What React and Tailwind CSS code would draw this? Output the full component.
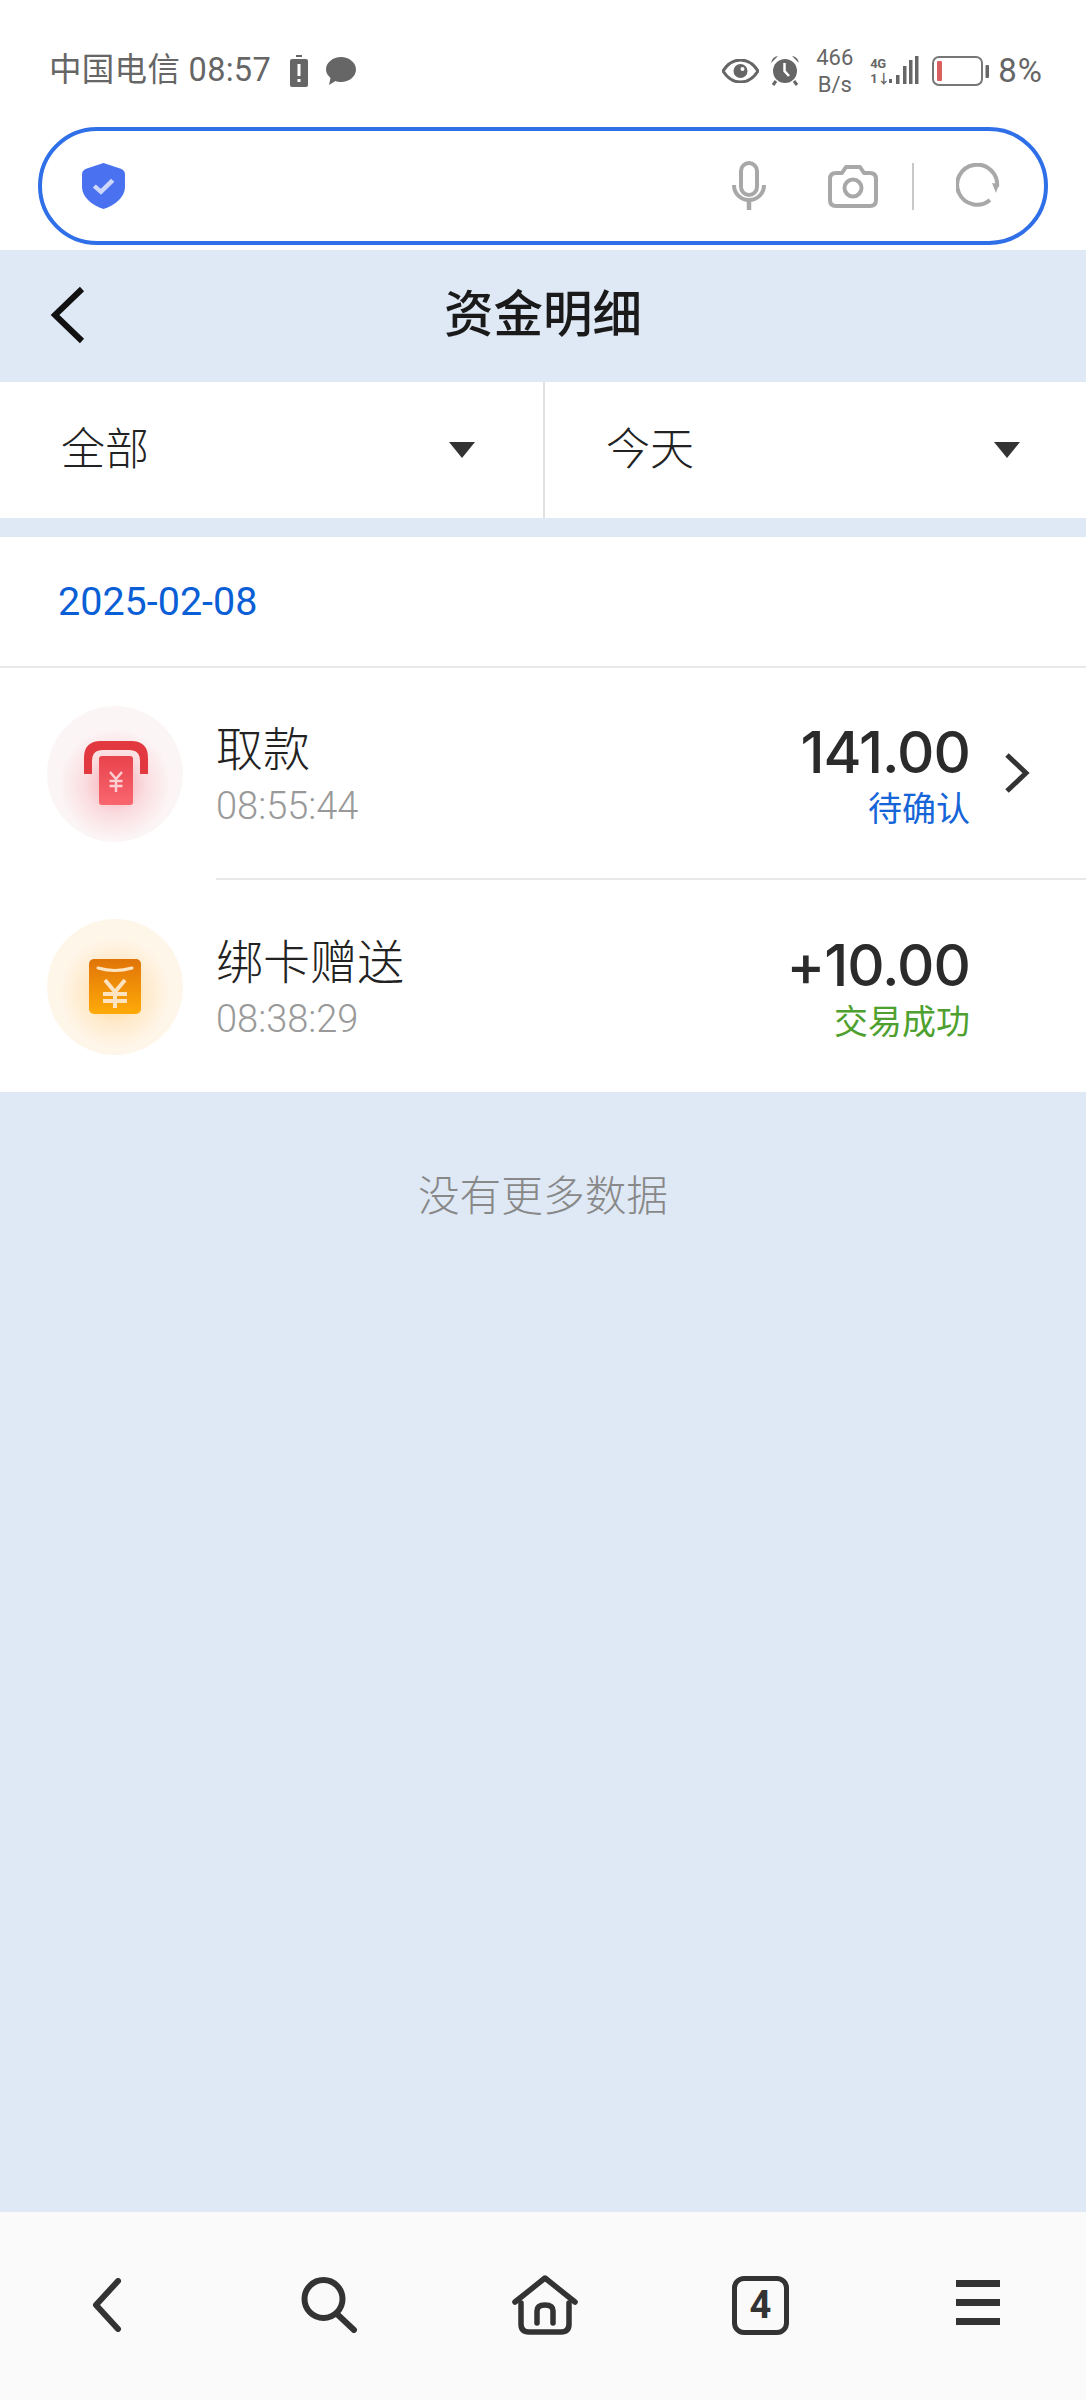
import React from "react";

const FONT = "font-['Roboto','Noto_Sans_CJK_SC',sans-serif]";

function Shield() {
  return (
    <svg width="45" height="48" viewBox="0 0 44 50" preserveAspectRatio="none">
      <path d="M22 1 L39 7 Q43 8.5 43 13 V26 C43 37 33 45 22 49 C11 45 1 37 1 26 V13 Q1 8.5 5 7 Z" fill="#4a72f0" />
      <path d="M13 25 L19.5 31 L31 19" fill="none" stroke="#ccd7fb" strokeWidth="4.5" />
    </svg>
  );
}

function Mic() {
  return (
    <svg width="34" height="50" viewBox="0 0 34 50" fill="none" stroke="#a8a8a8" strokeWidth="4">
      <rect x="9" y="2" width="16" height="32" rx="8" />
      <path d="M2 24 C2 33 9 39 17 39 C25 39 32 33 32 24" />
      <path d="M17 39 V49" strokeWidth="4.5" />
    </svg>
  );
}

function Camera() {
  return (
    <svg width="50" height="44" viewBox="0 0 50 44" fill="none" stroke="#a8a8a8" strokeWidth="4">
      <path d="M8 9 H14 L18 3 H32 L36 9 H42 Q48 9 48 15 V36 Q48 42 42 42 H8 Q2 42 2 36 V15 Q2 9 8 9 Z" strokeLinejoin="round" />
      <circle cx="25" cy="24" r="8.5" />
    </svg>
  );
}

function Reload() {
  return (
    <svg width="44" height="46" viewBox="0 0 44 46" fill="none">
      <path d="M34 37 A20 20 0 1 1 41 24" stroke="#a8a8a8" strokeWidth="4" />
      <path d="M36 20 L43 21 L40 30 Z" fill="#a8a8a8" />
    </svg>
  );
}

function StatusLeftIcons() {
  return (
    <div className="flex items-center gap-[18px]">
      <svg width="18" height="32" viewBox="0 0 18 32">
        <path d="M6 0 H12 V2 H6 Z M2 4 H16 Q18 4 18 6 V30 Q18 32 16 32 H2 Q0 32 0 30 V6 Q0 4 2 4 Z" fill="#666" />
        <path d="M7.5 9 H10.5 V21 H7.5 Z M7.5 24 H10.5 V27 H7.5 Z" fill="#fff" />
      </svg>
      <svg width="30" height="30" viewBox="0 0 30 30">
        <path d="M15 1 C23 1 30 6.500 30 13.500 C30 20.500 23 26 15 26 C13 26 11 25.700 9.500 25 L3 29 L4.500 22 C2 19.500 0 17 0 13.500 C0 6.500 7 1 15 1 Z" fill="#666" />
      </svg>
    </div>
  );
}

function StatusRightIcons() {
  return (
    <div className="flex items-center">
      <svg width="37" height="24" viewBox="0 0 37 24" className="mr-[11px]">
        <path d="M1 12 C6 4 12 1 18.500 1 C25 1 31 4 36 12 C31 20 25 23 18.500 23 C12 23 6 20 1 12 Z" fill="none" stroke="#666" strokeWidth="3" />
        <circle cx="18.500" cy="12" r="7" fill="#666" />
        <circle cx="20.500" cy="10" r="2" fill="#fff" />
      </svg>
      <svg width="30" height="31" viewBox="0 0 30 31" className="mr-[16px]">
        <circle cx="15" cy="16" r="12" fill="#666" />
        <path d="M1 8 Q2 2 8 1 Z M29 8 Q28 2 22 1 Z" fill="#666" />
        <path d="M6 26 L3 30 M24 26 L27 30" stroke="#666" strokeWidth="3" />
        <path d="M14.500 8 V16 L19 21" fill="none" stroke="#fff" strokeWidth="2.500" />
      </svg>
      <div className="flex flex-col items-center mr-[17px] w-[37px] text-[22px] leading-[27px] text-[#666]">
        <span>466</span>
        <span>B/s</span>
      </div>
      <div className="flex flex-col w-[18px] text-[13px] leading-[15px] font-bold text-[#666] tracking-[-0.5px]">
        <span>4G</span>
        <span>1↓</span>
      </div>
      <svg width="31" height="30" viewBox="0 0 31 30" className="mr-[13px]">
        <rect x="1" y="23" width="3" height="4" fill="#666" />
        <rect x="8" y="19" width="3.500" height="9" fill="#666" />
        <rect x="15" y="10" width="3.500" height="18" fill="#666" />
        <rect x="21" y="4" width="3.500" height="24" fill="#666" />
        <rect x="27" y="0" width="3.500" height="28" fill="#666" />
      </svg>
      <svg width="57" height="30" viewBox="0 0 57 30" className="mr-[9px]">
        <rect x="1" y="1" width="49" height="28" rx="6" fill="none" stroke="#777" strokeWidth="2" />
        <rect x="5" y="5" width="5" height="20" rx="1" fill="#d9605f" />
        <rect x="53.500" y="9" width="3.500" height="13" rx="1" fill="#666" />
      </svg>
      <span className="text-[33px] leading-none text-[#666] tracking-[1px]">8%</span>
    </div>
  );
}

function TakeIcon() {
  return (
    <svg width="136" height="136" viewBox="0 0 136 136" className="shrink-0">
      <defs>
        <radialGradient id="takeGlow" cx="50%" cy="50%" r="50%">
          <stop offset="0%" stopColor="#f0606c" stopOpacity="0.5" />
          <stop offset="55%" stopColor="#f0606c" stopOpacity="0.16" />
          <stop offset="100%" stopColor="#f0606c" stopOpacity="0" />
        </radialGradient>
        <linearGradient id="takeCard" x1="0" y1="0" x2="0" y2="1">
          <stop offset="0%" stopColor="#e8434c" />
          <stop offset="100%" stopColor="#f9666f" />
        </linearGradient>
      </defs>
      <circle cx="68" cy="68" r="68" fill="#fcf5f6" />
      <circle cx="68" cy="78" r="56" fill="url(#takeGlow)" />
      <path d="M37 68 V52 Q37 35 54 35 H84 Q101 35 101 52 V68 H93 V55 Q93 44 82 44 H56 Q45 44 45 55 V68 Z" fill="#e2383f" />
      <rect x="52" y="50" width="34" height="49" rx="3" fill="url(#takeCard)" />
      <path d="M63 66 L69 73 L75 66 M69 73 V86 M62.500 75 H75.500 M62.500 80 H75.500" fill="none" stroke="#fcd0d3" strokeWidth="2.400" />
    </svg>
  );
}

function BindIcon() {
  return (
    <svg width="136" height="136" viewBox="0 0 136 136" className="shrink-0 mt-[2px]">
      <defs>
        <radialGradient id="bindGlow" cx="50%" cy="50%" r="50%">
          <stop offset="0%" stopColor="#ffae2b" stopOpacity="0.5" />
          <stop offset="55%" stopColor="#ffae2b" stopOpacity="0.16" />
          <stop offset="100%" stopColor="#ffae2b" stopOpacity="0" />
        </radialGradient>
        <linearGradient id="bindCard" x1="0" y1="0" x2="0" y2="1">
          <stop offset="0%" stopColor="#e07408" />
          <stop offset="100%" stopColor="#ffab08" />
        </linearGradient>
      </defs>
      <circle cx="68" cy="68" r="68" fill="#fff6ea" />
      <circle cx="68" cy="74" r="56" fill="url(#bindGlow)" />
      <rect x="42" y="40" width="52" height="55" rx="5" fill="url(#bindCard)" />
      <path d="M51 49 Q68 54 85 49" fill="none" stroke="#fde3c0" strokeWidth="3" strokeLinecap="round" />
      <path d="M58 61 L68 73 L78 61 M68 73 V89 M56 75 H80 M56 82 H80" fill="none" stroke="#fde3c0" strokeWidth="4" />
    </svg>
  );
}

function NavIcons() {
  const stroke = "#333";
  return (
    <div className="h-[188px] bg-[#fafafa] flex items-center pl-[91px] pb-[2px]">
      <svg width="32" height="54" viewBox="0 0 32 54" fill="none" stroke={stroke} strokeWidth="6" strokeLinecap="round" strokeLinejoin="round">
        <path d="M27 3 L5 27 L27 51" />
      </svg>
      <svg width="56" height="56" viewBox="0 0 56 56" fill="none" stroke={stroke} strokeWidth="6" strokeLinecap="round" className="ml-[178px]">
        <circle cx="22.500" cy="22" r="19" />
        <path d="M36 37 L53 53" />
      </svg>
      <svg width="66" height="60" viewBox="0 0 66 60" fill="none" stroke={stroke} strokeWidth="5.500" strokeLinecap="round" strokeLinejoin="round" className="ml-[155px]">
        <path d="M3 27 L33 3 L63 27" />
        <path d="M9 28 V49 Q9 57 17 57 H49 Q57 57 57 49 V28" />
        <path d="M25 48 V36 Q25 30 33 30 Q41 30 41 36 V48" />
      </svg>
      <div className="ml-[154px] w-[57px] h-[59px] rounded-[12px] border-[5px] border-[#333] flex items-center justify-center text-[38px] leading-none font-bold text-[#333]">4</div>
      <div className="ml-[167px] flex flex-col gap-[12px] w-[44px] mb-[5px]">
        <div className="h-[7px] bg-[#333]" />
        <div className="h-[7px] bg-[#333]" />
        <div className="h-[7px] bg-[#333]" />
      </div>
    </div>
  );
}

function Caret() {
  return <div className="w-0 h-0 border-x-[13px] border-x-transparent border-t-[16px] border-t-[#333]" />;
}

function Row({ icon, name, time, amount, status, statusColor, arrow, indentBorder }) {
  return (
    <div className="flex h-[212px] pl-[47px] bg-white">
      <div className="flex items-center h-full">{icon}</div>
      <div className={`flex-1 ml-[33px] flex items-center ${indentBorder ? "border-b-2 border-[#e8e8e8]" : ""}`}>
        <div className="flex-1 flex flex-col">
          <span className="text-[47px] leading-[66px] text-[#222] font-light">{name}</span>
          <span className="text-[38px] leading-[46px] text-[#999] font-light">{time}</span>
        </div>
        <div className="flex flex-col items-end">
          <span className="font-['Inter','Roboto',sans-serif] text-[58px] leading-[72px] font-medium text-[#2b2b2b] tracking-[-1px]">{amount}</span>
          <span className={`text-[34px] leading-[42px] ${statusColor}`}>{status}</span>
        </div>
        <div className="w-[116px] pl-[34px]">
          {arrow && (
            <svg width="26" height="42" viewBox="0 0 26 42" fill="none" stroke="#333" strokeWidth="5">
              <path d="M3 3 L22 21 L3 39" />
            </svg>
          )}
        </div>
      </div>
    </div>
  );
}

export default function App() {
  return (
    <div className={`${FONT} w-[1086px] h-[2400px] flex flex-col bg-[#dfe8f5]`}>
      <div className="bg-white pb-[5px]">
        <div className="h-[127px] pt-[14px] pl-[49px] pr-[43px] flex items-center justify-between">
          <div className="flex items-center">
            <span className="text-[32.500px] leading-none text-[#666] mr-[19px] tracking-[0.3px]">中国电信 08:57</span>
            <StatusLeftIcons />
          </div>
          <StatusRightIcons />
        </div>
        <div className="mx-[38px] h-[118px] rounded-full border-[4px] border-[#2f6fe8] flex items-center pl-[39px]">
          <Shield />
          <div className="ml-auto flex items-center">
            <Mic />
            <div className="ml-[62px]"><Camera /></div>
            <div className="ml-[34px] w-[2px] h-[47px] bg-[#c8c8c8]" />
            <div className="ml-[42px] mr-[44px]"><Reload /></div>
          </div>
        </div>
      </div>

      <div className="h-[132px] relative flex items-center justify-center">
        <svg width="36" height="58" viewBox="0 0 36 58" fill="none" stroke="#111" strokeWidth="6" className="absolute left-[50px] top-[36px]">
          <path d="M32 3 L5 29 L32 55" />
        </svg>
        <span className="text-[49.500px] font-medium text-[#1a1a1a] leading-none">资金明细</span>
      </div>

      <div className="h-[136px] flex bg-white">
        <div className="w-[545px] border-r-2 border-[#e2e2e2] flex items-center justify-between pl-[61px] pr-[68px] text-[#333]">
          <span className="text-[44px] font-light leading-none text-[#222]">全部</span>
          <Caret />
        </div>
        <div className="flex-1 flex items-center justify-between pl-[61px] pr-[66px] text-[#333]">
          <span className="text-[44px] font-light leading-none text-[#222]">今天</span>
          <Caret />
        </div>
      </div>

      <div className="mt-[19px] h-[131px] bg-white border-b-2 border-[#e8e8e8] flex items-center pl-[58px]">
        <span className="text-[39.500px] text-[#0a5fd6] leading-none">2025-02-08</span>
      </div>

      <Row icon={<TakeIcon />} name="取款" time="08:55:44" amount="141.00" status="待确认" statusColor="text-[#1565d8]" arrow indentBorder />
      <Row icon={<BindIcon />} name="绑卡赠送" time="08:38:29" amount="+10.00" status="交易成功" statusColor="text-[#4ea02f]" />

      <div className="flex-1 flex justify-center pt-[80px] text-[41.700px] leading-[50px] text-[#888] font-light">
        没有更多数据
      </div>

      <NavIcons />
    </div>
  );
}
